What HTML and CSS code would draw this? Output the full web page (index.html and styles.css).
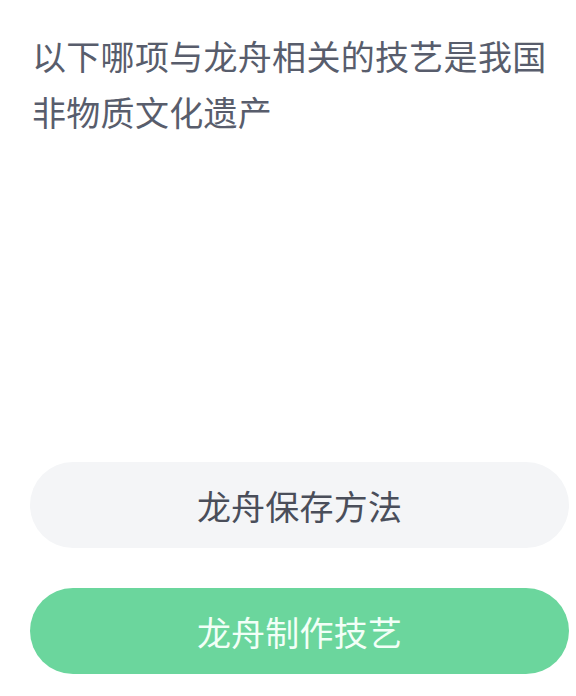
FILE: index.html
```html
<!DOCTYPE html>
<html lang="zh-CN">
<head>
    <meta charset="UTF-8">
    <meta name="viewport" content="width=device-width, initial-scale=1.0">
    <title>答题</title>
    <link rel="stylesheet" href="styles.css">
</head>
<body>
    <div class="quiz">
        <p class="question">以下哪项与龙舟相关的技艺是我国非物质文化遗产</p>
        <div class="options">
            <button class="option">龙舟保存方法</button>
            <button class="option correct">龙舟制作技艺</button>
        </div>
    </div>
</body>
</html>
```

FILE: styles.css
```css
body {
    margin: 0;
    background-color: #fff;
    font-family: "Noto Sans CJK SC", "Noto Sans", sans-serif;
}
.quiz {
    display: flex;
    flex-direction: column;
    min-height: 100vh;
    box-sizing: border-box;
    padding: 0 7px 22px 30px;
}
.question {
    margin: 0;
    padding: 28px 0 0 2px;
    font-size: 34px;
    line-height: 56px;
    letter-spacing: 0.3px;
    color: #585d6c;
}
.options {
    margin-top: auto;
    display: flex;
    flex-direction: column;
    gap: 40px;
}
.option {
    height: 86px;
    border: none;
    border-radius: 43px;
    background-color: #f4f5f7;
    color: #4a4e5a;
    font-family: inherit;
    font-size: 34px;
    letter-spacing: 0.2px;
    padding: 0;
}
.option.correct {
    background-color: #6bd69d;
    color: #f2fff7;
}
```
